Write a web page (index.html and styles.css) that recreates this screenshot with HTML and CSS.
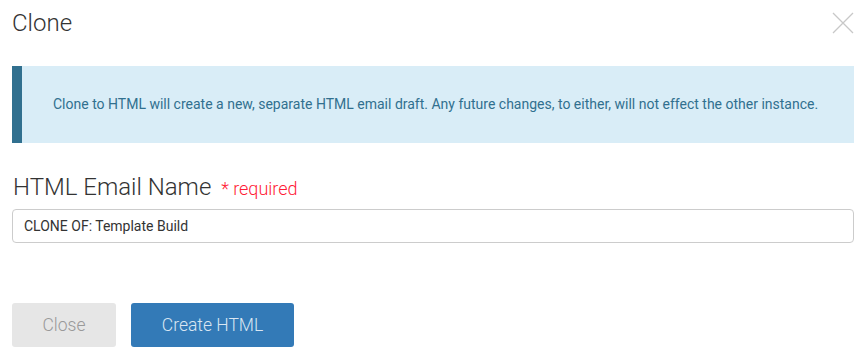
FILE: index.html
```html
<!DOCTYPE html>
<html>
<head>
<meta charset="utf-8">
<link rel="stylesheet" href="styles.css">
</head>
<body>
<div class="modal">
  <div class="modal-header">
    <h1 class="modal-title">Clone</h1>
    <button class="close-btn" aria-label="Close">
      <svg width="22" height="22" viewBox="0 0 22 22"><path d="M1 1 L21 21 M21 1 L1 21" stroke="#c8c8c8" stroke-width="1.3" fill="none"/></svg>
    </button>
  </div>
  <div class="alert">Clone to HTML will create a new, separate HTML email draft. Any future changes, to either, will not effect the other instance.</div>
  <div class="field">
    <label class="field-label">HTML Email Name <span class="required">* required</span></label>
    <input class="field-input" type="text" value="CLONE OF: Template Build">
  </div>
  <div class="actions">
    <button class="btn btn-default">Close</button>
    <button class="btn btn-primary">Create HTML</button>
  </div>
</div>
</body>
</html>
```

FILE: styles.css
```css
* { box-sizing: border-box; }
html, body { margin: 0; padding: 0; background: #fff; }
body { font-family: Roboto, "Liberation Sans", sans-serif; color: #333; }
.modal { padding: 0 9px 0 12px; }
.modal-header { display: flex; justify-content: space-between; align-items: flex-start; height: 66px; }
.modal-title { margin: 7px 0 0 0; font-size: 24px; font-weight: 300; color: #333; line-height: 32px; }
.close-btn { margin: 12px 0 0 0; padding: 0; border: 0; background: none; width: 22px; height: 22px; display: block; }
.close-btn svg { display: block; }
.alert { height: 77px; background: #d9edf7; border-left: 10px solid #31708f; color: #31708f; font-size: 14px; display: flex; align-items: center; padding-left: 31px; padding-bottom: 1px; }
.field { margin-top: 30px; }
.field-label { display: block; font-size: 24px; font-weight: 300; line-height: 28px; color: #333; margin-left: 1px; }
.required { color: #ff1a35; font-size: 18px; font-weight: 300; margin-left: 4px; }
.field-input { display: block; width: 100%; height: 34px; margin-top: 6px; border: 1px solid #ccc; border-radius: 4px; padding: 0 11px; font-family: Roboto, "Liberation Sans", sans-serif; font-size: 14px; color: #333; }
.actions { display: flex; gap: 15px; margin-top: 60px; }
.btn { height: 44px; border: 0; border-radius: 3px; font-family: Roboto, "Liberation Sans", sans-serif; font-size: 17.5px; font-weight: 300; padding: 0; }
.btn-default { width: 104px; background: #e6e6e6; color: #999; }
.btn-primary { width: 163px; background: #337ab7; color: #d9e6f2; }
```
